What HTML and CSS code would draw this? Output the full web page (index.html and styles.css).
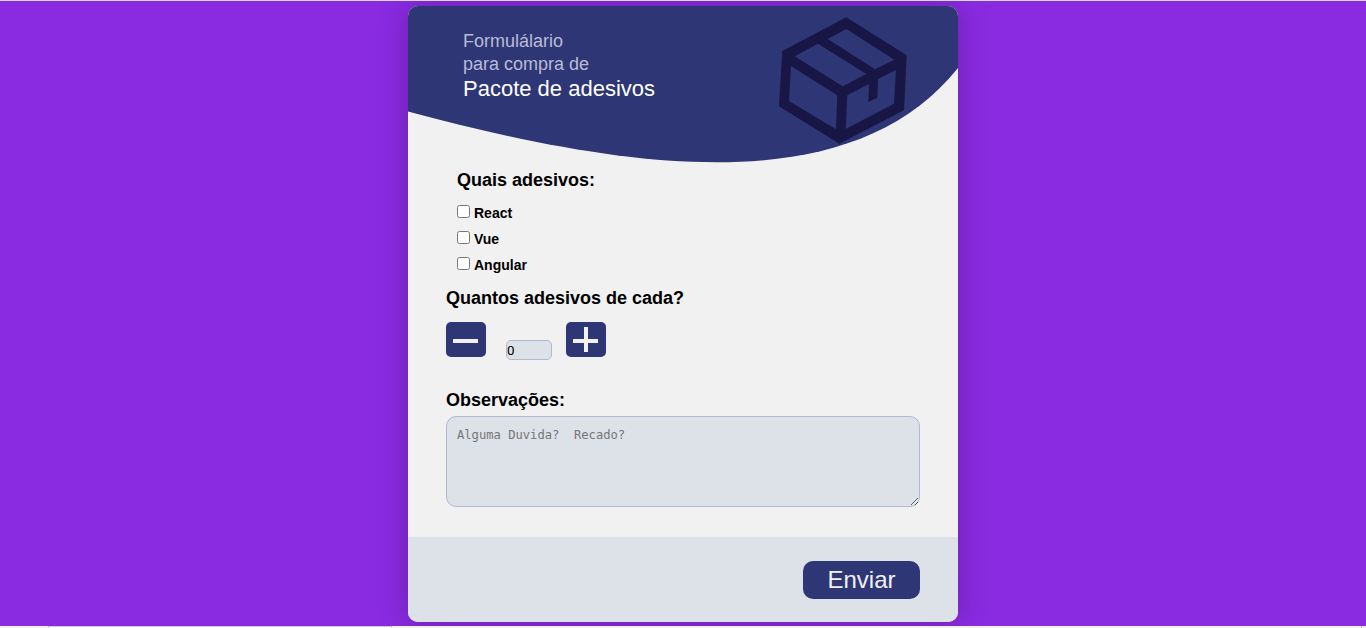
FILE: index.html
```html
<!DOCTYPE html>
<html lang="pt-BR">
<head>
<meta charset="utf-8">
<title>Pacote de adesivos</title>
<link rel="stylesheet" href="styles.css">
</head>
<body>
<main class="page">
  <form class="card">
    <header class="hero">
      <svg class="hero-art" viewBox="0 0 550 160" aria-hidden="true">
        <path fill="#2e3675" d="M0 0H550V62C445 193 230 167.6 0 105.5Z"/>
        <path fill="#171645" fill-rule="evenodd" d="M438.3 11.2L498.7 49.3L496 104.3L431.3 137.7L371 100.3L374.3 45ZM438.3 23L419.7 33L467 63.3L486.3 53.7ZM410 37.7L386.7 50.3L434.7 80.3L458.3 68ZM383 60L381 95L428 123.3L429.3 89.3ZM439.3 89.3L437.7 123L486 97.7L488 64L470 73L469.3 91.7L460.3 96L461 78Z"/>
      </svg>
      <div class="hero-text">
        <p class="lead">Formulálario</p>
        <p class="lead">para compra de</p>
        <h1 class="title">Pacote de adesivos</h1>
      </div>
    </header>
    <section class="choices">
      <h2 class="heading">Quais adesivos:</h2>
      <label class="choice"><input class="check" type="checkbox">React</label>
      <label class="choice"><input class="check" type="checkbox">Vue</label>
      <label class="choice"><input class="check" type="checkbox">Angular</label>
    </section>
    <section class="amount">
      <h2 class="heading">Quantos adesivos de cada?</h2>
      <div class="stepper">
        <button class="step" type="button" aria-label="Menos"><svg width="40" height="35"><path d="M7 19H32" stroke="#f1f1f1" stroke-width="4"/></svg></button>
        <input class="count" type="text" value="0" aria-label="Quantidade">
        <button class="step" type="button" aria-label="Mais"><svg width="40" height="35"><path d="M7 19H32M20 5V30" stroke="#f1f1f1" stroke-width="4"/></svg></button>
      </div>
    </section>
    <section class="notes">
      <h2 class="heading">Observações:</h2>
      <textarea class="message" placeholder="Alguma Duvida?  Recado?"></textarea>
    </section>
    <footer class="footer"><button class="send" type="button">Enviar</button></footer>
  </form>
</main>
<div class="bottom-bar"><div class="bottom-field"></div><div class="bottom-mark"></div></div>
</body>
</html>
```
FILE: styles.css
```css
* { box-sizing: border-box; }
body { margin: 0; height: 628px; overflow: hidden; font-family: "Liberation Sans", Arial, sans-serif; }
p, h1, h2 { margin: 0; }
.page { height: 626px; padding-top: 5px; border-top: 1px solid #d5d9dc; background: #8a2be2; display: flex; justify-content: center; align-items: flex-start; overflow: hidden; }
.card { width: 550px; height: 616px; display: flex; flex-direction: column; background: #f1f1f1; border-radius: 10px; overflow: hidden; box-shadow: 0 0 30px rgba(0, 0, 0, .25); }
.hero { display: grid; height: 160px; flex: none; }
.hero-art, .hero-text { grid-area: 1 / 1; }
.hero-art { width: 550px; height: 160px; }
.hero-text { z-index: 1; padding: 24px 0 0 55px; }
.lead { color: #b9bbd5; font-size: 18px; line-height: 23px; }
.title { color: #fff; font-size: 22px; font-weight: 400; line-height: 25px; }
.heading { font-size: 18px; line-height: 20px; color: #000; }
.choices { padding: 4px 0 0 49px; height: 112px; }
.choices .heading { margin-bottom: 14px; }
.choice { display: flex; align-items: flex-start; gap: 4px; height: 26px; font-size: 14px; font-weight: 700; line-height: 18px; }
.check { width: 13px; height: 13px; margin: 1px 0 0; }
.amount { padding: 10px 38px 0; height: 102px; }
.stepper { display: flex; margin-top: 14px; align-items: flex-start; }
.step { width: 40px; height: 35px; padding: 0; border: 0; border-radius: 5px; background: #2e3675; }
.step svg { display: block; }
.count { width: 46px; height: 20px; margin: 18px 14px 0 20px; padding: 0; border: 1px solid #b4b7d1; border-radius: 5px; background: #dde1e8; font: 13.33px Roboto, "Liberation Sans", sans-serif; color: #000; }
.notes { padding: 10px 38px 0; height: 157px; }
.message { display: block; width: 474px; height: 91px; margin-top: 6px; padding: 10px; border: 1px solid #b4b7d1; border-radius: 10px; background: #dde1e8; font: 12.15px/16px "DejaVu Sans Mono", monospace; resize: both; }
.message::placeholder { color: #757575; }
.footer { height: 85px; padding: 24px 38px 0; display: flex; justify-content: flex-end; align-items: flex-start; background: #dde1e8; }
.send { width: 117px; height: 38px; padding: 0; border: 0; border-radius: 10px; background: #2e3675; color: #f1f1f1; font: 24px "Liberation Sans", Arial, sans-serif; }
.bottom-bar { height: 2px; display: flex; background: #f1f1f1; }
.bottom-field { width: 344px; margin-left: 48px; border: 1px solid #ccc; border-bottom: 0; background: #fff; }
.bottom-mark { width: 1px; margin-left: 969px; background: #aaa; }
```
